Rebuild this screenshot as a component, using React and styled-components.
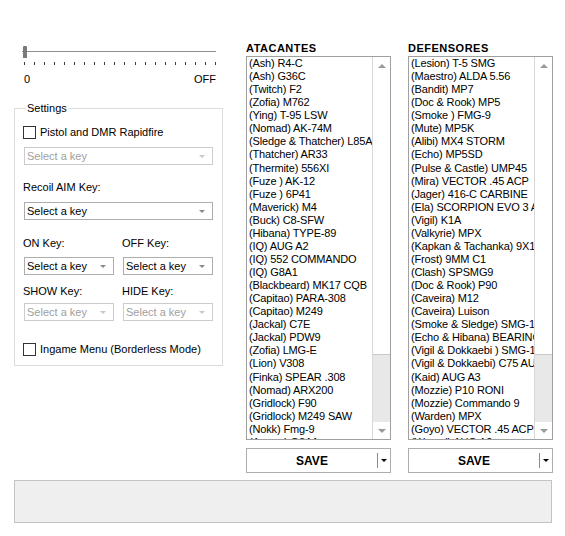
import React from 'react';
import styled, { createGlobalStyle } from 'styled-components';

const GlobalStyle = createGlobalStyle`
    html, body {
        margin: 0;
        padding: 0;
        background: #ffffff;
        font-family: "Liberation Sans", Arial, sans-serif;
        font-size: 11px;
        color: #000;
    }
`;

const attackers = [
    '(Ash) R4-C',
    '(Ash) G36C',
    '(Twitch) F2',
    '(Zofia) M762',
    '(Ying) T-95 LSW',
    '(Nomad) AK-74M',
    '(Sledge & Thatcher) L85A2',
    '(Thatcher) AR33',
    '(Thermite) 556XI',
    '(Fuze ) AK-12',
    '(Fuze ) 6P41',
    '(Maverick) M4',
    '(Buck) C8-SFW',
    '(Hibana) TYPE-89',
    '(IQ) AUG A2',
    '(IQ) 552 COMMANDO',
    '(IQ) G8A1',
    '(Blackbeard) MK17 CQB',
    '(Capitao) PARA-308',
    '(Capitao) M249',
    '(Jackal) C7E',
    '(Jackal) PDW9',
    '(Zofia) LMG-E',
    '(Lion) V308',
    '(Finka) SPEAR .308',
    '(Nomad) ARX200',
    '(Gridlock) F90',
    '(Gridlock) M249 SAW',
    '(Nokk) Fmg-9',
    '(Amaru) G8A1',
];

const defenders = [
    '(Lesion) T-5 SMG',
    '(Maestro) ALDA 5.56',
    '(Bandit) MP7',
    '(Doc & Rook) MP5',
    '(Smoke ) FMG-9',
    '(Mute) MP5K',
    '(Alibi) MX4 STORM',
    '(Echo) MP5SD',
    '(Pulse & Castle) UMP45',
    '(Mira) VECTOR .45 ACP',
    '(Jager) 416-C CARBINE',
    '(Ela) SCORPION EVO 3 A1',
    '(Vigil) K1A',
    '(Valkyrie) MPX',
    '(Kapkan & Tachanka) 9X19VSN',
    '(Frost) 9MM C1',
    '(Clash) SPSMG9',
    '(Doc & Rook) P90',
    '(Caveira) M12',
    '(Caveira) Luison',
    '(Smoke & Sledge) SMG-11',
    '(Echo & Hibana) BEARING 9',
    '(Vigil & Dokkaebi ) SMG-12',
    '(Vigil & Dokkaebi) C75 AUTO',
    '(Kaid) AUG A3',
    '(Mozzie) P10 RONI',
    '(Mozzie) Commando 9',
    '(Warden) MPX',
    '(Goyo) VECTOR .45 ACP',
    '(Wamai) AUG A2',
];

const Window = styled.div`
    width: 565px;
    height: 536px;
    box-sizing: border-box;
    padding: 41px 0 0 14px;
    display: flex;
    flex-direction: column;
`;

const TopArea = styled.div`
    display: flex;
    align-items: flex-start;
`;

const LeftColumn = styled.div`
    width: 209px;
    display: flex;
    flex-direction: column;
`;

/* ---- track bar ---- */

const TrackBar = styled.div`
    position: relative;
    margin: 4px 0 0 8px;
    width: 194px;
    height: 22px;
`;

const TrackLine = styled.div`
    position: absolute;
    left: 0;
    right: 0;
    top: 6px;
    height: 1px;
    background: #8c8c8c;
`;

const Thumb = styled.div`
    position: absolute;
    left: 1px;
    top: 1px;
    width: 4px;
    height: 12px;
    background: #7a7a7a;
    border-radius: 1px 1px 0 0;
`;

const Ticks = styled.div`
    position: absolute;
    left: 2px;
    right: 0;
    top: 17px;
    height: 3px;
    display: flex;
    justify-content: space-between;
`;

const Tick = styled.span`
    width: 1px;
    height: 3px;
    background: #3c3c3c;
`;

const TrackLabels = styled.div`
    display: flex;
    justify-content: space-between;
    margin: 6px 7px 0 10px;
    line-height: 13px;
    color: #000;
`;

/* ---- settings group ---- */

const GroupBox = styled.fieldset`
    margin: 16px 0 0 0;
    padding: 0 8px 9px 8px;
    border: 1px solid #dcdcdc;
    width: 209px;
    box-sizing: border-box;
    display: flex;
    flex-direction: column;
    min-inline-size: 0;
`;

const GroupLegend = styled.legend`
    padding: 0 1px;
    margin-left: 3px;
    line-height: 12px;
`;

const CheckRow = styled.label`
    display: flex;
    align-items: center;
    gap: 4px;
    height: 14px;
    margin-top: ${(p) => p.mt || 0}px;
`;

const CheckBox = styled.span`
    width: 11px;
    height: 11px;
    border: 1px solid #333333;
    background: #fff;
    flex-shrink: 0;
`;

const FieldLabel = styled.div`
    line-height: 13px;
    margin-top: ${(p) => p.mt || 0}px;
`;

const Combo = styled.div`
    height: 18px;
    box-sizing: border-box;
    border: 1px solid ${(p) => (p.disabled ? '#cccccc' : '#adadad')};
    background: #fff;
    color: ${(p) => (p.disabled ? '#a0a0a0' : '#000')};
    display: flex;
    align-items: center;
    justify-content: space-between;
    padding: 0 7px 0 2px;
    margin-top: ${(p) => p.mt || 0}px;
    margin-left: 1px;
    width: ${(p) => p.w || 189}px;
`;

const ComboArrow = styled.span`
    width: 0;
    height: 0;
    border-left: 3px solid transparent;
    border-right: 3px solid transparent;
    border-top: 3px solid ${(p) => (p.disabled ? '#c8c8c8' : '#8a8a8a')};
`;

const PairRow = styled.div`
    display: grid;
    grid-template-columns: 99px 91px;
    margin-top: ${(p) => p.mt || 0}px;
`;

const PairCell = styled.div`
    display: flex;
    flex-direction: column;
`;

/* ---- lists ---- */

const ListColumn = styled.div`
    width: ${(p) => p.w}px;
    margin-left: ${(p) => p.ml}px;
    display: flex;
    flex-direction: column;
`;

const ListTitle = styled.div`
    font-weight: bold;
    font-size: 11px;
    letter-spacing: 0.5px;
    line-height: 14px;
    height: 14px;
`;

const ListBox = styled.div`
    margin-top: 1px;
    height: 384px;
    box-sizing: border-box;
    border: 1px solid #a0a0a0;
    display: flex;
    background: #fff;
`;

const ListItems = styled.div`
    flex: 1;
    overflow: hidden;
    padding-left: 2px;
`;

const ListItem = styled.div`
    line-height: 13px;
    height: 13.07px;
    white-space: nowrap;
    letter-spacing: -0.15px;
`;

const ScrollBar = styled.div`
    width: 17px;
    display: flex;
    flex-direction: column;
    background: #e8e8e8;
    border-left: 1px solid #d8d8d8;
`;

const ScrollButton = styled.div`
    height: 17px;
    background: #fff;
    display: flex;
    align-items: center;
    justify-content: center;
`;

const ArrowUp = styled.span`
    width: 0;
    height: 0;
    border-left: 4px solid transparent;
    border-right: 4px solid transparent;
    border-bottom: 4px solid #9a9a9a;
`;

const ArrowDown = styled.span`
    width: 0;
    height: 0;
    border-left: 4px solid transparent;
    border-right: 4px solid transparent;
    border-top: 4px solid #9a9a9a;
`;

const ScrollThumb = styled.div`
    height: 280px;
    background: #fff;
    border-bottom: 1px solid #c8c8c8;
`;

const ScrollTrack = styled.div`
    flex: 1;
`;

const SaveButton = styled.div`
    margin-top: 8px;
    height: 25px;
    box-sizing: border-box;
    border: 1px solid #adadad;
    background: #fff;
    display: flex;
    align-items: stretch;
`;

const SaveLabel = styled.div`
    flex: 1;
    display: flex;
    align-items: center;
    justify-content: center;
    font-weight: bold;
    font-size: 12px;
`;

const SaveDrop = styled.div`
    width: 12px;
    border-left: 1px solid #8a8a8a;
    margin: 4px 0;
    display: flex;
    align-items: center;
    justify-content: center;
`;

const DropArrow = styled.span`
    width: 0;
    height: 0;
    border-left: 3px solid transparent;
    border-right: 3px solid transparent;
    border-top: 3px solid #000;
`;

const StatusPanel = styled.div`
    margin-top: 7px;
    width: 538px;
    height: 43px;
    box-sizing: border-box;
    background: #efefef;
    border: 1px solid #c3c3c3;
`;

const KeyCombo = ({ disabled, w, mt }) => (
    <Combo disabled={disabled} w={w} mt={mt}>
        <span>Select a key</span>
        <ComboArrow disabled={disabled} />
    </Combo>
);

const WeaponList = ({ title, items, w, ml }) => (
    <ListColumn w={w} ml={ml}>
        <ListTitle>{title}</ListTitle>
        <ListBox>
            <ListItems>
                {items.map((item) => (
                    <ListItem key={item}>{item}</ListItem>
                ))}
            </ListItems>
            <ScrollBar>
                <ScrollButton>
                    <ArrowUp />
                </ScrollButton>
                <ScrollThumb />
                <ScrollTrack />
                <ScrollButton>
                    <ArrowDown />
                </ScrollButton>
            </ScrollBar>
        </ListBox>
        <SaveButton>
            <SaveLabel>SAVE</SaveLabel>
            <SaveDrop>
                <DropArrow />
            </SaveDrop>
        </SaveButton>
    </ListColumn>
);

const App = () => {
    const ticks = Array.from({ length: 20 });

    return (
        <>
            <GlobalStyle />
            <Window>
                <TopArea>
                    <LeftColumn>
                        <TrackBar>
                            <TrackLine />
                            <Thumb />
                            <Ticks>
                                {ticks.map((_, i) => (
                                    <Tick key={i} />
                                ))}
                            </Ticks>
                        </TrackBar>
                        <TrackLabels>
                            <span>0</span>
                            <span>OFF</span>
                        </TrackLabels>

                        <GroupBox>
                            <GroupLegend>Settings</GroupLegend>
                            <CheckRow mt={11}>
                                <CheckBox />
                                <span>Pistol and DMR Rapidfire</span>
                            </CheckRow>
                            <KeyCombo disabled mt={8} />
                            <FieldLabel mt={16}>Recoil AIM Key:</FieldLabel>
                            <KeyCombo mt={8} />
                            <PairRow mt={17}>
                                <PairCell>
                                    <FieldLabel>ON Key:</FieldLabel>
                                    <KeyCombo w={90} mt={7} />
                                </PairCell>
                                <PairCell>
                                    <FieldLabel>OFF Key:</FieldLabel>
                                    <KeyCombo w={90} mt={7} />
                                </PairCell>
                            </PairRow>
                            <PairRow mt={10}>
                                <PairCell>
                                    <FieldLabel>SHOW Key:</FieldLabel>
                                    <KeyCombo disabled w={90} mt={5} />
                                </PairCell>
                                <PairCell>
                                    <FieldLabel>HIDE Key:</FieldLabel>
                                    <KeyCombo disabled w={90} mt={5} />
                                </PairCell>
                            </PairRow>
                            <CheckRow mt={21}>
                                <CheckBox />
                                <span>Ingame Menu (Borderless Mode)</span>
                            </CheckRow>
                        </GroupBox>
                    </LeftColumn>

                    <WeaponList title="ATACANTES" items={attackers} w={145} ml={23} />
                    <WeaponList title="DEFENSORES" items={defenders} w={145} ml={17} />
                </TopArea>
                <StatusPanel />
            </Window>
        </>
    );
};

export default App;
